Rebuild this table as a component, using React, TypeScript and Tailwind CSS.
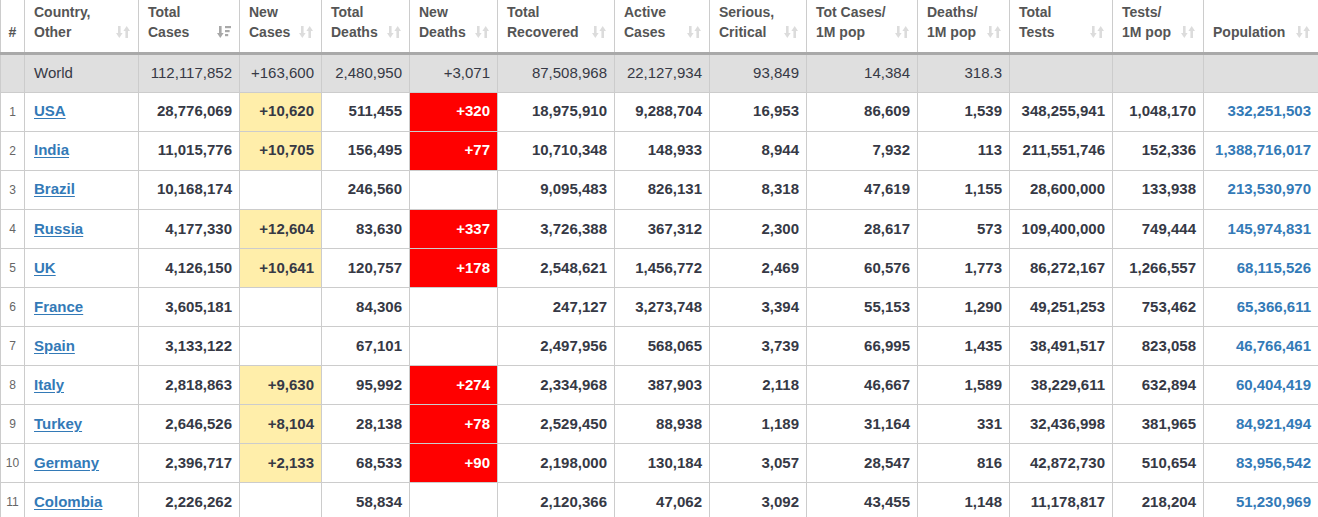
import React from "react";

type Row = {
  n?: number;
  country: string;
  cells: string[];
};

const HEADERS: { lines: string[]; w: string; sort?: "none" | "active" | "hidden" }[] = [
  { lines: ["#"], w: "w-[24px]", sort: "hidden" },
  { lines: ["Country,", "Other"], w: "w-[114px]" },
  { lines: ["Total", "Cases"], w: "w-[101px]", sort: "active" },
  { lines: ["New", "Cases"], w: "w-[82px]" },
  { lines: ["Total", "Deaths"], w: "w-[88px]" },
  { lines: ["New", "Deaths"], w: "w-[88px]" },
  { lines: ["Total", "Recovered"], w: "w-[117px]" },
  { lines: ["Active", "Cases"], w: "w-[95px]" },
  { lines: ["Serious,", "Critical"], w: "w-[97px]" },
  { lines: ["Tot Cases/", "1M pop"], w: "w-[111px]" },
  { lines: ["Deaths/", "1M pop"], w: "w-[92px]" },
  { lines: ["Total", "Tests"], w: "w-[103px]" },
  { lines: ["Tests/", "1M pop"], w: "w-[91px]" },
  { lines: ["Population"], w: "w-[115px]" },
];

const WORLD = [
  "112,117,852", "+163,600", "2,480,950", "+3,071", "87,508,968", "22,127,934",
  "93,849", "14,384", "318.3", "", "", "",
];

const ROWS: Row[] = [
  { n: 1, country: "USA", cells: ["28,776,069", "+10,620", "511,455", "+320", "18,975,910", "9,288,704", "16,953", "86,609", "1,539", "348,255,941", "1,048,170", "332,251,503"] },
  { n: 2, country: "India", cells: ["11,015,776", "+10,705", "156,495", "+77", "10,710,348", "148,933", "8,944", "7,932", "113", "211,551,746", "152,336", "1,388,716,017"] },
  { n: 3, country: "Brazil", cells: ["10,168,174", "", "246,560", "", "9,095,483", "826,131", "8,318", "47,619", "1,155", "28,600,000", "133,938", "213,530,970"] },
  { n: 4, country: "Russia", cells: ["4,177,330", "+12,604", "83,630", "+337", "3,726,388", "367,312", "2,300", "28,617", "573", "109,400,000", "749,444", "145,974,831"] },
  { n: 5, country: "UK", cells: ["4,126,150", "+10,641", "120,757", "+178", "2,548,621", "1,456,772", "2,469", "60,576", "1,773", "86,272,167", "1,266,557", "68,115,526"] },
  { n: 6, country: "France", cells: ["3,605,181", "", "84,306", "", "247,127", "3,273,748", "3,394", "55,153", "1,290", "49,251,253", "753,462", "65,366,611"] },
  { n: 7, country: "Spain", cells: ["3,133,122", "", "67,101", "", "2,497,956", "568,065", "3,739", "66,995", "1,435", "38,491,517", "823,058", "46,766,461"] },
  { n: 8, country: "Italy", cells: ["2,818,863", "+9,630", "95,992", "+274", "2,334,968", "387,903", "2,118", "46,667", "1,589", "38,229,611", "632,894", "60,404,419"] },
  { n: 9, country: "Turkey", cells: ["2,646,526", "+8,104", "28,138", "+78", "2,529,450", "88,938", "1,189", "31,164", "331", "32,436,998", "381,965", "84,921,494"] },
  { n: 10, country: "Germany", cells: ["2,396,717", "+2,133", "68,533", "+90", "2,198,000", "130,184", "3,057", "28,547", "816", "42,872,730", "510,654", "83,956,542"] },
  { n: 11, country: "Colombia", cells: ["2,226,262", "", "58,834", "", "2,120,366", "47,062", "3,092", "43,455", "1,148", "11,178,817", "218,204", "51,230,969"] },
];

function SortIcon({ active }: { active?: boolean }) {
  return (
    <svg width="14" height="14" viewBox="0 0 14 14" className={active ? "fill-[#a8a8a8]" : "fill-[#dcdcdc]"}>
      {/* down arrow */}
      <rect x="2" y="1" width="2.6" height="8" />
      <polygon points="0,8 6.6,8 3.3,13" />
      {active ? (
        <>
          <rect x="8" y="1" width="6" height="2.2" />
          <rect x="8" y="5" width="4.6" height="2.2" />
          <rect x="8" y="9" width="3.2" height="2.2" />
        </>
      ) : (
        <>
          <polygon points="7.4,6 14,6 10.7,1" />
          <rect x="9.4" y="5" width="2.6" height="8" />
        </>
      )}
    </svg>
  );
}

export default function App() {
  return (
    <div className="w-[1318px] overflow-hidden bg-white font-['Liberation_Sans',Arial,sans-serif] text-[#363945]">
      <table className="table-fixed border-collapse w-[1318px]">
        <thead>
          <tr className="h-[53px] border-b-[3px] border-[#a9a9a9]">
            {HEADERS.map((h, i) => (
              <th
                key={i}
                className={`${h.w} border-x border-[#cccccc] align-bottom p-0 text-[14px] font-bold leading-[20px] text-[#555555] text-left`}
              >
                {h.sort === "hidden" ? (
                  <div className="pb-[10px] text-center">#</div>
                ) : (
                  <div className="flex items-end justify-between pl-[9px] pr-[8px] pb-[10px]">
                    <div>
                      {h.lines.map((l) => (
                        <div key={l}>{l}</div>
                      ))}
                    </div>
                    <div className="mb-[3px] shrink-0">
                      <SortIcon active={h.sort === "active"} />
                    </div>
                  </div>
                )}
              </th>
            ))}
          </tr>
        </thead>
        <tbody>
          <tr className="h-[39px] bg-[#dfdfdf] text-[15px]">
            <td className="border border-[#cccccc] border-t-0" />
            <td className="border border-[#cccccc] border-t-0 pl-[9px]">World</td>
            {WORLD.map((c, i) => (
              <td key={i} className="border border-[#cccccc] border-t-0 pr-[7px] text-right">
                {c}
              </td>
            ))}
          </tr>
          {ROWS.map((r) => (
            <tr key={r.country} className="h-[39.1px] text-[15px] font-bold">
              <td className="border border-[#cccccc] text-center text-[12px] font-normal text-[#666666]">{r.n}</td>
              <td className="border border-[#cccccc] pl-[9px]">
                <a href="#" className="text-[#337ab7] underline underline-offset-[2px]">
                  {r.country}
                </a>
              </td>
              {r.cells.map((c, i) => {
                let cls = "";
                if (i === 1 && c) cls = "bg-[#ffeeaa]";
                if (i === 3 && c) cls = "bg-[#ff0000] text-white";
                if (i === 11) cls = "text-[#337ab7]";
                return (
                  <td key={i} className={`border border-[#cccccc] pr-[7px] text-right ${cls}`}>
                    {c}
                  </td>
                );
              })}
            </tr>
          ))}
        </tbody>
      </table>
    </div>
  );
}
